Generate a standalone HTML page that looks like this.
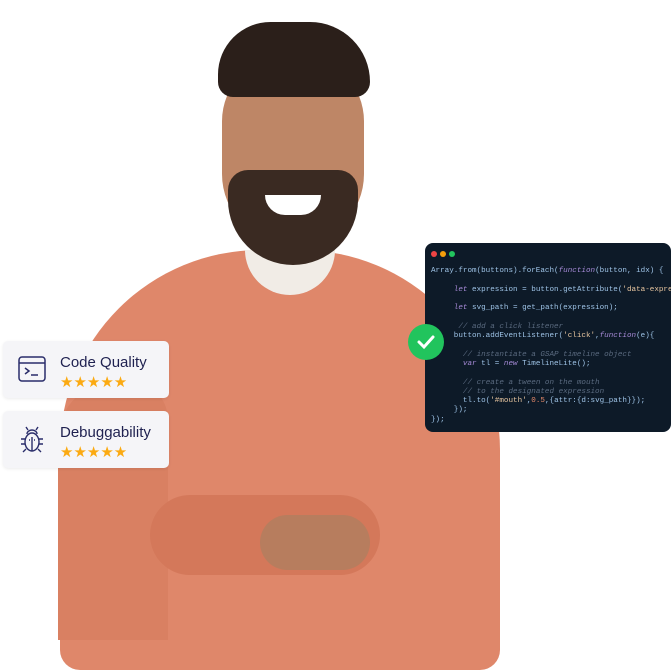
<!DOCTYPE html>
<html><head><style>
body{margin:0;width:671px;height:630px;background:#fff;position:relative;overflow:hidden;font-family:"Liberation Sans",sans-serif}
.a{position:absolute}
.card{position:absolute;left:3px;width:166px;height:57px;background:#f5f5f8;border-radius:5px;box-shadow:0 1px 3px rgba(0,0,0,.08)}
.card .t{position:absolute;left:57px;top:13px;font-size:15px;color:#1f2150}
.card .s{position:absolute;left:57px;top:32px;font-size:15px;color:#fbaa12;letter-spacing:0px}
.code{left:425px;top:243px;width:246px;height:189px;background:#0d1a28;border-radius:8px;overflow:hidden}
.code pre{margin:0;position:absolute;left:6px;top:24px;font-family:"Liberation Mono",monospace;font-size:7.6px;line-height:9.3px;color:#9ec3e6;white-space:pre}
.k{color:#a78bd8;font-style:italic}.c{color:#5b6b80;font-style:italic}.st{color:#e8c6a0}.n{color:#e88a6a}
</style></head><body>
<!-- sweater -->
<div class="a" style="left:60px;top:250px;width:440px;height:420px;background:#df876a;border-radius:200px 200px 20px 20px"></div>
<div class="a" style="left:58px;top:380px;width:110px;height:260px;background:#d98062;border-radius:60px 40px 0 0"></div>
<div class="a" style="left:150px;top:495px;width:230px;height:80px;background:#d4785a;border-radius:40px"></div>
<!-- neck / tshirt -->
<div class="a" style="left:245px;top:250px;width:90px;height:45px;background:#f1ece6;border-radius:0 0 45px 45px"></div>
<!-- head -->
<div class="a" style="left:222px;top:55px;width:142px;height:190px;background:#be8666;border-radius:70px 70px 75px 75px"></div>
<div class="a" style="left:228px;top:170px;width:130px;height:95px;background:#3a2a22;border-radius:20px 20px 65px 65px"></div>
<div class="a" style="left:265px;top:195px;width:56px;height:20px;background:#fff;border-radius:0 0 28px 28px"></div>
<div class="a" style="left:218px;top:22px;width:152px;height:75px;background:#2b1f1a;border-radius:70px 80px 20px 20px"></div>
<!-- hands -->
<div class="a" style="left:260px;top:515px;width:110px;height:55px;background:#b77d5e;border-radius:30px"></div>
<!-- cards -->
<div class="card" style="top:341px">
<svg class="a" style="left:15px;top:15px" width="28" height="26" viewBox="0 0 28 26" fill="none" stroke="#2a2d6a" stroke-width="1.5"><rect x="1" y="1" width="26" height="24" rx="3"/><path d="M1 7H27M7 12l4 3-4 3M13 19h7"/></svg>
<div class="t">Code Quality</div><div class="s">★★★★★</div></div>
<div class="card" style="top:411px">
<svg class="a" style="left:16px;top:14px" width="26" height="28" viewBox="0 0 26 28" fill="none" stroke="#2a2d6a" stroke-width="1.4"><ellipse cx="13" cy="17" rx="7" ry="9"/><path d="M8 9a5 4 0 0 1 10 0M6 14H2M20 14h4M6 19H2M20 19h4M7 24l-3 3M19 24l3 3M9 5L7 2M17 5l2-3M13 12v14M10 15h1M15 15h1"/></svg>
<div class="t">Debuggability</div><div class="s">★★★★★</div></div>
<!-- code -->
<div class="a code">
<div class="a" style="left:6px;top:8px;width:6px;height:6px;border-radius:3px;background:#ef4444"></div>
<div class="a" style="left:15px;top:8px;width:6px;height:6px;border-radius:3px;background:#f59e0b"></div>
<div class="a" style="left:24px;top:8px;width:6px;height:6px;border-radius:3px;background:#22c55e"></div>
<pre>Array.from(buttons).forEach(<span class="k">function</span>(button, idx) {

     <span class="k">let</span> expression = button.getAttribute(<span class="st">'data-expression'</span>

     <span class="k">let</span> svg_path = get_path(expression);

      <span class="c">// add a click listener</span>
     button.addEventListener(<span class="st">'click'</span>,<span class="k">function</span>(e){

       <span class="c">// instantiate a GSAP timeline object</span>
       <span class="k">var</span> tl = <span class="k">new</span> TimelineLite();

       <span class="c">// create a tween on the mouth</span>
       <span class="c">// to the designated expression</span>
       tl.to(<span class="st">'#mouth'</span>,<span class="n">0.5</span>,{attr:{d:svg_path}});
     });
});</pre>
</div>
<div class="a" style="left:408px;top:324px;width:36px;height:36px;border-radius:18px;background:#21c45d">
<svg width="36" height="36"><path d="M11 18l5 5 9-10" stroke="#fff" stroke-width="3" fill="none" stroke-linecap="round"/></svg></div>
</body></html>
